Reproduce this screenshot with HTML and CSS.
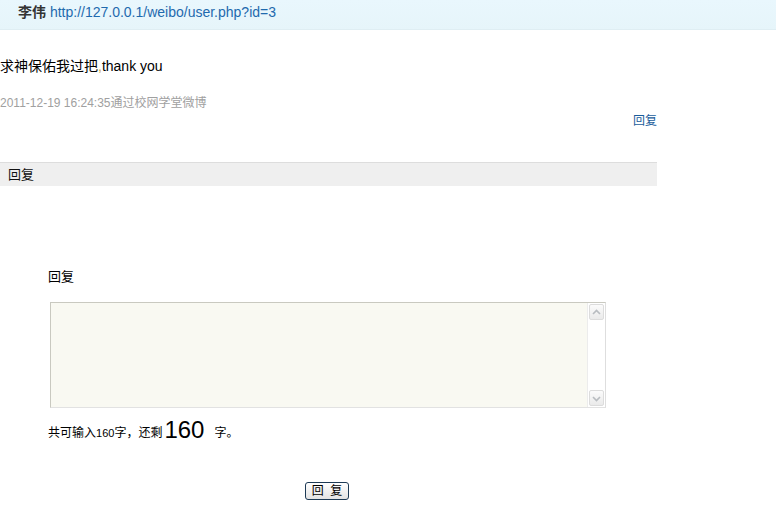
FILE: index.html
```html
<!DOCTYPE html>
<html lang="zh">
<head>
<meta charset="utf-8">
<title>回复</title>
<link rel="stylesheet" href="styles.css">
</head>
<body>
<div class="header">
  <span class="name">李伟</span> <a class="url" href="#">http://127.0.0.1/weibo/user.php?id=3</a>
</div>
<div class="post">
  <p class="content">求神保佑我过把<span class="comma">,</span>thank you</p>
  <p class="meta">2011-12-19 16:24:35通过校网学堂微博</p>
  <div class="actions"><a href="#" class="reply-link">回复</a></div>
</div>
<div class="bar">回复</div>
<form class="reply-form">
  <div class="label">回复</div>
  <div class="textarea-wrap">
    <div class="textarea"></div>
    <div class="scrollbar">
      <div class="sb-btn"><svg width="11" height="7" viewBox="0 0 11 7"><path d="M2 5 L5.5 1.5 L9 5" fill="none" stroke="#b8bcc0" stroke-width="1.6"/></svg></div>
      <div class="sb-track"></div>
      <div class="sb-btn"><svg width="11" height="7" viewBox="0 0 11 7"><path d="M2 2 L5.5 5.5 L9 2" fill="none" stroke="#b8bcc0" stroke-width="1.6"/></svg></div>
    </div>
  </div>
  <div class="count">共可输入<span class="num">160</span>字，还剩<span class="big">160</span><span class="gap"></span>字。</div>
  <div class="submit-row"><button type="button" class="btn">回&nbsp;&nbsp;复</button></div>
</form>
</body>
</html>
```
FILE: styles.css
```css
html, body {
  margin: 0;
  padding: 0;
  background: #fff;
  font-family: "Liberation Sans", "Noto Sans CJK SC", sans-serif;
  color: #000;
}
.header {
  height: 30px;
  box-sizing: border-box;
  background: linear-gradient(#e9f7fd, #e6f5fa);
  border-bottom: 1px solid #dfeef3;
  padding-left: 18px;
  font-size: 14px;
  line-height: 24px;
}
.name {
  font-weight: bold;
  color: #333;
}
.url {
  color: #1f6aae;
  text-decoration: none;
  font-size: 14px;
}
.post {
  width: 657px;
}
.content {
  margin: 26px 0 0 0;
  font-size: 14px;
  line-height: 20px;
}
.comma { color: #c9a64c; }
.meta {
  margin: 18px 0 0 0;
  font-size: 12px;
  color: #a0a0a0;
  line-height: 18px;
}
.actions {
  text-align: right;
  font-size: 12px;
  line-height: 18px;
}
.reply-link {
  color: #1b5d9b;
  text-decoration: none;
}
.bar {
  margin-top: 32px;
  width: 657px;
  height: 24px;
  box-sizing: border-box;
  background: #efefef;
  border-top: 1px solid #dddddd;
  padding-left: 8px;
  font-size: 13px;
  line-height: 23px;
  color: #111;
}
.reply-form {
  margin: 0;
  padding-left: 48px;
}
.label {
  margin-top: 82px;
  font-size: 13px;
  line-height: 18px;
}
.textarea-wrap {
  margin: 16px 0 0 2px;
  width: 556px;
  height: 106px;
  box-sizing: border-box;
  border: 1px solid #c9c9c0;
  border-right-color: #dedede;
  border-bottom-color: #e2e2e2;
  display: flex;
  background: #f9f9f2;
}
.textarea {
  flex: 1;
}
.scrollbar {
  width: 17px;
  background: #fff;
  border-left: 1px solid #ececec;
  display: flex;
  flex-direction: column;
}
.sb-btn {
  height: 16px;
  margin: 1px;
  box-sizing: border-box;
  border: 1px solid #dcdcdc;
  border-radius: 2px;
  background: linear-gradient(#fbfbfb, #eaeaea);
  display: flex;
  align-items: center;
  justify-content: center;
}
.sb-track { flex: 1; }
.count {
  margin-top: 8px;
  font-size: 12px;
  line-height: 28px;
  height: 28px;
}
.num { font-size: 11px; }
.big {
  font-size: 24px;
  vertical-align: -1px;
  margin-left: 2px;
}
.gap {
  display: inline-block;
  width: 10px;
}
.submit-row {
  margin-top: 37px;
  padding-left: 257px;
}
.btn {
  width: 44px;
  height: 18px;
  padding: 0;
  border: 1px solid #1d3a55;
  border-radius: 3px;
  background: linear-gradient(#ffffff, #e3e3e3);
  font-family: "Liberation Sans", "Noto Sans CJK SC", sans-serif;
  font-size: 12px;
  line-height: 16px;
  color: #000;
}
```
